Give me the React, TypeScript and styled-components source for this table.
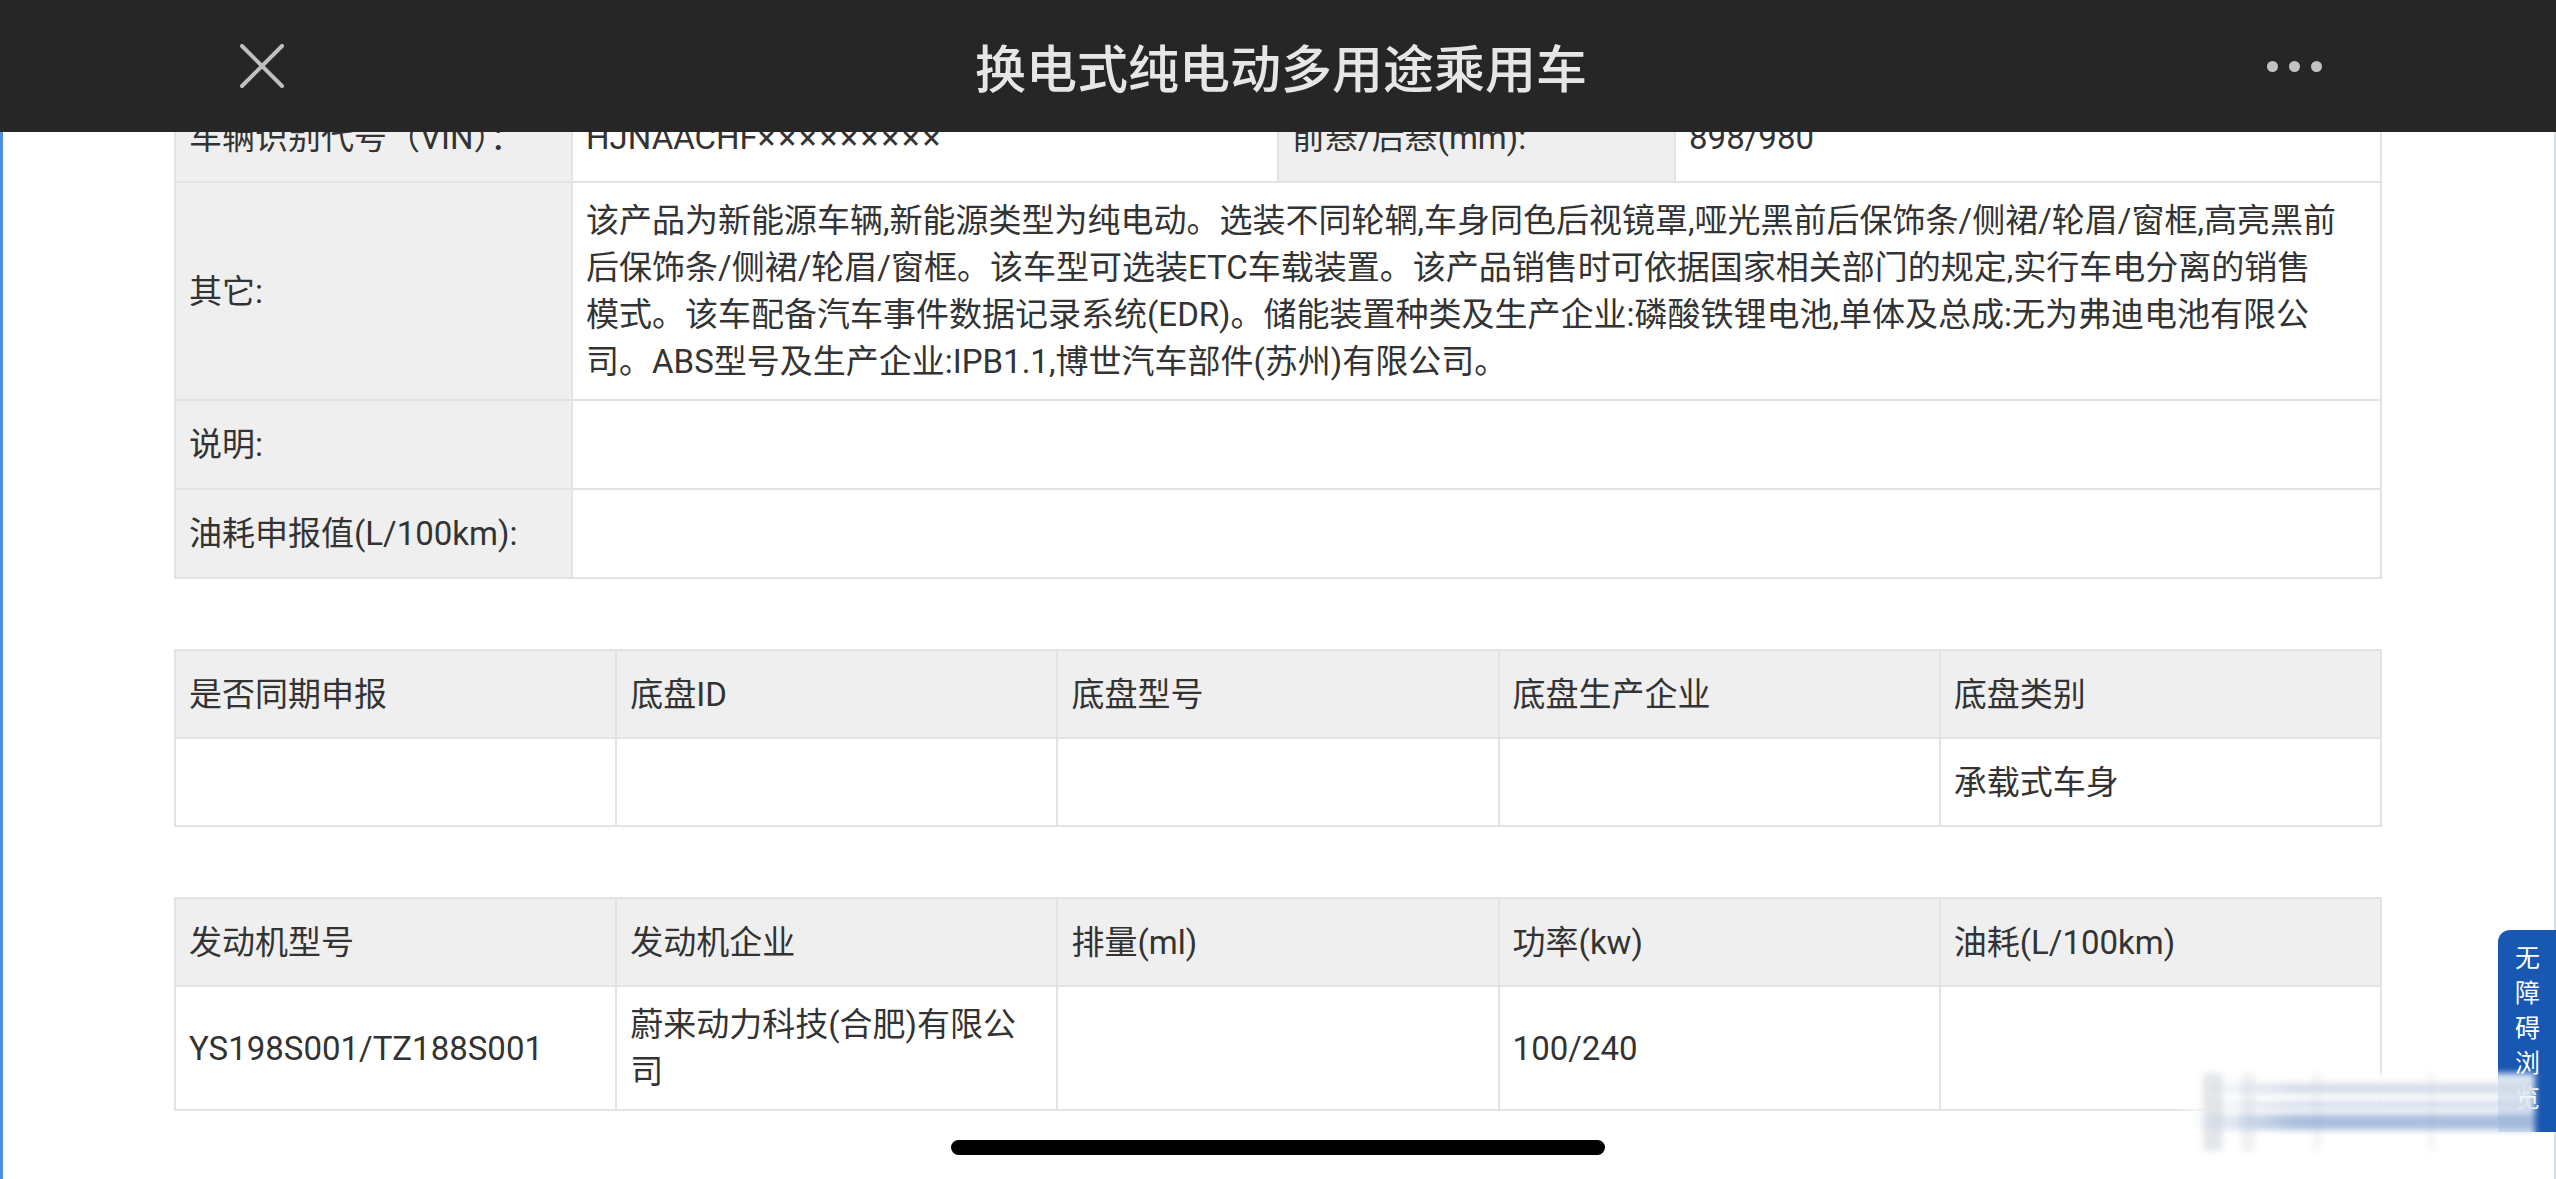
import React from "react";
import styled, { createGlobalStyle } from "styled-components";

const FONT = `"Noto Sans CJK SC", "Noto Sans", sans-serif`;
const TEXT_FONT = `Roboto, "Noto Sans CJK SC", "Noto Sans", sans-serif`;
const LINE = "#e3e3e3";

const GlobalStyle = createGlobalStyle`
  html, body { margin: 0; padding: 0; background: #fff; overflow: hidden; }
  body { font-family: ${FONT}; color: #333; }
  #root { width: 2556px; height: 1179px; }
`;

const Screen = styled.div`
  position: relative;
  width: 2556px;
  height: 1179px;
  overflow: hidden;
  background: #fff;
`;

const Page = styled.main`
  box-sizing: border-box;
  height: 100%;
  border-left: 3px solid #4b8fe6;
  border-right: 2px solid #d9dee4;
  padding: 92px 0 0 171px;
  display: flex;
  flex-direction: column;
  gap: 70px;
`;

const Header = styled.header`
  position: absolute;
  top: 0;
  left: 0;
  right: 0;
  height: 132px;
  background: #262626;
  display: grid;
  grid-template-columns: 1fr auto 1fr;
  align-items: center;
  padding: 0 234px 0 240px;
  box-sizing: border-box;
  z-index: 5;
`;

const Title = styled.h1`
  margin: 0;
  font-family: ${FONT};
  font-size: 51px;
  font-weight: 500;
  color: #e6e6e6;
  letter-spacing: 0;
  line-height: 1;
`;

const CloseButton = styled.button`
  justify-self: start;
  background: none;
  border: 0;
  padding: 0;
  width: 44px;
  height: 44px;
  display: flex;
  cursor: pointer;
`;

const MoreButton = styled.button`
  justify-self: end;
  background: none;
  border: 0;
  padding: 0;
  display: flex;
  gap: 11px;
  align-items: center;
  cursor: pointer;
`;

const Dot = styled.span`
  width: 11px;
  height: 11px;
  border-radius: 50%;
  background: #c2c2c2;
`;

const Grid = styled.div<{ $cols: string }>`
  display: grid;
  grid-template-columns: ${(p) => p.$cols};
  width: 2208px;
  box-sizing: border-box;
  border-top: 2px solid ${LINE};
  border-left: 2px solid ${LINE};
`;

const Cell = styled.div<{ $gray?: boolean; $span?: number; $min?: number }>`
  box-sizing: border-box;
  min-height: ${(p) => p.$min ?? 89}px;
  padding: 14px 13px;
  display: flex;
  align-items: center;
  background: ${(p) => (p.$gray ? "#efefef" : "#fff")};
  border-right: 2px solid ${LINE};
  border-bottom: 2px solid ${LINE};
  grid-column: ${(p) => (p.$span ? `span ${p.$span}` : "auto")};
`;

const CellText = styled.span`
  font-family: ${TEXT_FONT};
  font-size: 33px;
  line-height: 47px;
  color: #333;
  white-space: nowrap;
`;

const Masked = styled.span`
  letter-spacing: 3px;
`;

const Tab = styled.div`
  position: absolute;
  right: 0;
  top: 930px;
  width: 58px;
  height: 202px;
  background: #1857b2;
  border-radius: 12px 0 0 0;
  box-sizing: border-box;
  padding-top: 15px;
  display: flex;
  justify-content: center;
  z-index: 4;
`;

const TabText = styled.span`
  writing-mode: vertical-rl;
  font-family: ${FONT};
  font-size: 25px;
  letter-spacing: 10px;
  color: #fff;
  line-height: 1;
`;

const Smudge = styled.div`
  position: absolute;
  left: 2173px;
  top: 1073px;
  width: 362px;
  height: 80px;
  filter: blur(3px);
  z-index: 6;
  background: linear-gradient(90deg, rgba(255,255,255,0) 0%, rgba(255,255,255,0.85) 10%, rgba(255,255,255,0.85) 100%);
`;

const Band = styled.div<{ $top: number; $h: number; $c: string }>`
  position: absolute;
  left: 20px;
  right: 0;
  top: ${(p) => p.$top}px;
  height: ${(p) => p.$h}px;
  background: linear-gradient(90deg, rgba(255,255,255,0), ${(p) => p.$c} 30%, ${(p) => p.$c});
`;

const Post = styled.div<{ $left: number; $w: number; $c: string }>`
  position: absolute;
  top: 0;
  bottom: 2px;
  left: ${(p) => p.$left}px;
  width: ${(p) => p.$w}px;
  background: ${(p) => p.$c};
`;

const HomeBar = styled.div`
  position: absolute;
  left: 50%;
  margin-left: -327px;
  top: 1140px;
  width: 654px;
  height: 15px;
  border-radius: 8px;
  background: #000;
  z-index: 7;
`;

const T = ({ children }: { children: React.ReactNode }) => <CellText>{children}</CellText>;

const chassisHead = ["是否同期申报", "底盘ID", "底盘型号", "底盘生产企业", "底盘类别"];
const chassisBody = ["", "", "", "", "承载式车身"];
const engineHead = ["发动机型号", "发动机企业", "排量(ml)", "功率(kw)", "油耗(L/100km)"];

export default function App() {
  return (
    <>
      <GlobalStyle />
      <Screen>
        <Page>
          <Grid $cols="18fr 32fr 18fr 32fr">
            <Cell $gray><T>车辆识别代号（VIN）：</T></Cell>
            <Cell><T>HJNAACHF<Masked>×××××××××</Masked></T></Cell>
            <Cell $gray><T>前悬/后悬(mm):</T></Cell>
            <Cell><T>898/980</T></Cell>

            <Cell $gray><T>其它:</T></Cell>
            <Cell $span={3}>
              <T>
                该产品为新能源车辆,新能源类型为纯电动。选装不同轮辋,车身同色后视镜罩,哑光黑前后保饰条/侧裙/轮眉/窗框,高亮黑前
                <br />
                后保饰条/侧裙/轮眉/窗框。该车型可选装ETC车载装置。该产品销售时可依据国家相关部门的规定,实行车电分离的销售
                <br />
                模式。该车配备汽车事件数据记录系统(EDR)。储能装置种类及生产企业:磷酸铁锂电池,单体及总成:无为弗迪电池有限公
                <br />
                司。ABS型号及生产企业:IPB1.1,博世汽车部件(苏州)有限公司。
              </T>
            </Cell>

            <Cell $gray><T>说明:</T></Cell>
            <Cell $span={3}><T>{""}</T></Cell>

            <Cell $gray><T>油耗申报值(L/100km):</T></Cell>
            <Cell $span={3}><T>{""}</T></Cell>
          </Grid>

          <Grid $cols="repeat(5, 1fr)">
            {chassisHead.map((h) => (
              <Cell key={h} $gray $min={88}><T>{h}</T></Cell>
            ))}
            {chassisBody.map((b, i) => (
              <Cell key={i} $min={88}><T>{b}</T></Cell>
            ))}
          </Grid>

          <Grid $cols="repeat(5, 1fr)">
            {engineHead.map((h) => (
              <Cell key={h} $gray $min={88}><T>{h}</T></Cell>
            ))}
            <Cell $min={88}><T>YS198S001/TZ188S001</T></Cell>
            <Cell $min={88}>
              <T>
                蔚来动力科技(合肥)有限公
                <br />司
              </T>
            </Cell>
            <Cell $min={88}><T>{""}</T></Cell>
            <Cell $min={88}><T>100/240</T></Cell>
            <Cell $min={88}><T>{""}</T></Cell>
          </Grid>
        </Page>

        <Header>
          <CloseButton aria-label="关闭">
            <svg width="44" height="44" viewBox="0 0 44 44">
              <path d="M2 2 L42 42 M42 2 L2 42" stroke="#bfbfbf" strokeWidth="4" strokeLinecap="round" fill="none" />
            </svg>
          </CloseButton>
          <Title>换电式纯电动多用途乘用车</Title>
          <MoreButton aria-label="更多">
            <Dot />
            <Dot />
            <Dot />
          </MoreButton>
        </Header>

        <Tab>
          <TabText>无障碍浏览</TabText>
        </Tab>

        <Smudge>
          <Post $left={30} $w={20} $c="rgba(225,228,232,0.9)" />
          <Post $left={68} $w={14} $c="rgba(235,237,240,0.8)" />
          <Post $left={140} $w={8} $c="rgba(238,240,243,0.7)" />
          <Post $left={255} $w={6} $c="rgba(238,240,243,0.7)" />
          <Band $top={10} $h={11} $c="rgba(205,214,228,0.8)" />
          <Band $top={28} $h={8} $c="rgba(200,210,226,0.75)" />
          <Band $top={41} $h={16} $c="rgba(150,175,212,0.8)" />
        </Smudge>

        <HomeBar />
      </Screen>
    </>
  );
}
